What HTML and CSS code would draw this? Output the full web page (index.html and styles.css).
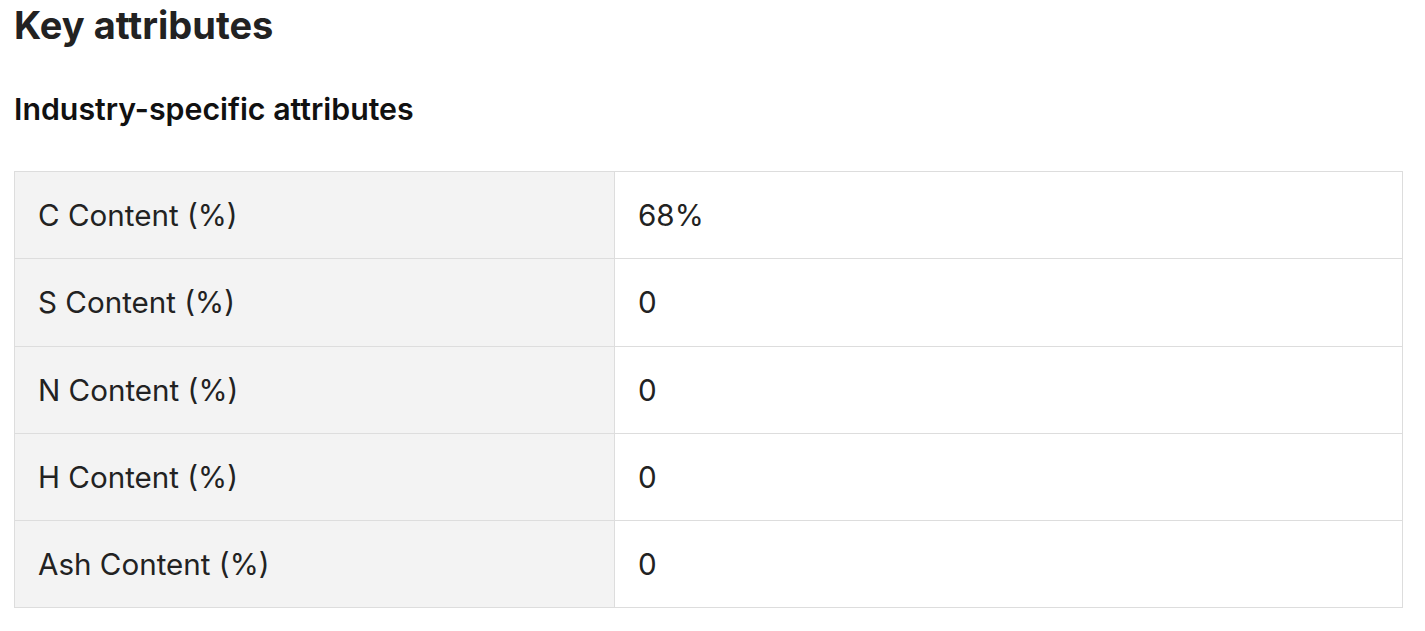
FILE: index.html
```html
<!DOCTYPE html>
<html>
<head>
<meta charset="utf-8">
<link rel="stylesheet" href="styles.css">
</head>
<body>
<section class="attrs">
  <h1 class="title">Key attributes</h1>
  <h2 class="subtitle">Industry-specific attributes</h2>
  <table class="attr-table">
    <tbody>
      <tr><th>C Content (%)</th><td>68%</td></tr>
      <tr><th>S Content (%)</th><td>0</td></tr>
      <tr><th>N Content (%)</th><td>0</td></tr>
      <tr><th>H Content (%)</th><td>0</td></tr>
      <tr><th>Ash Content (%)</th><td>0</td></tr>
    </tbody>
  </table>
</section>
</body>
</html>
```

FILE: styles.css
```css
html, body {
  margin: 0;
  padding: 0;
  background: #fff;
}
body {
  font-family: Inter, "Noto Sans", sans-serif;
  color: #222;
}
.attrs {
  padding: 0 22px 0 14px;
}
.title {
  margin: 0;
  padding-top: 2px;
  font-size: 38px;
  font-weight: 700;
  line-height: 46px;
  color: #222;
}
.subtitle {
  margin: 43px 0 0 0;
  font-size: 30.3px;
  font-weight: 600;
  line-height: 36px;
  color: #111;
}
.attr-table {
  margin-top: 44px;
  width: 100%;
  border-collapse: collapse;
  font-size: 29.6px;
}
.attr-table th,
.attr-table td {
  border: 1px solid #dddddd;
  height: 86.25px;
  padding: 0 23px;
  text-align: left;
  font-weight: 400;
  vertical-align: middle;
}
.attr-table th {
  width: 553px;
  background: #f3f3f3;
}
.attr-table td {
  background: #fff;
}
```
